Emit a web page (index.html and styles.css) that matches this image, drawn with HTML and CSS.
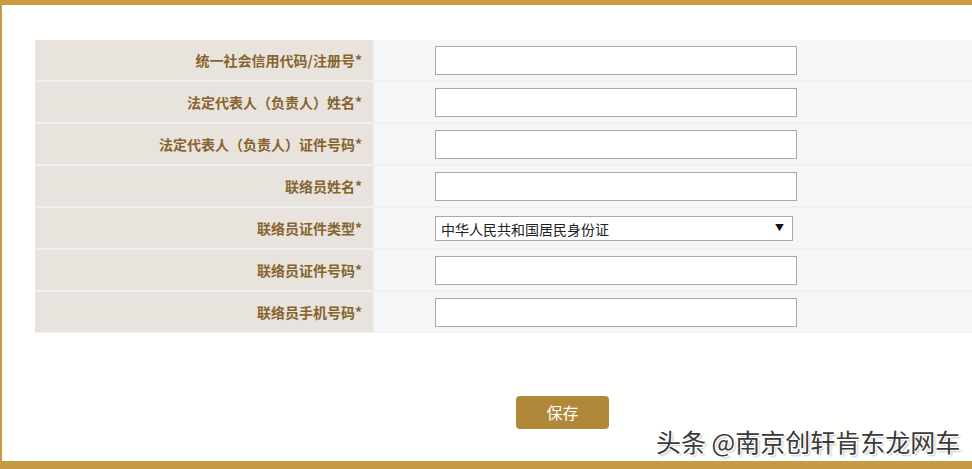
FILE: index.html
```html
<!DOCTYPE html>
<html lang="zh-CN">
<head>
<meta charset="utf-8">
<title>联络员信息</title>
<link rel="stylesheet" href="styles.css">
</head>
<body>
<div class="page">
  <div class="form-grid">
    <div class="label">统一社会信用代码/注册号*</div>
    <div class="field"><input class="text-input" type="text"></div>
    <div class="label">法定代表人（负责人）姓名*</div>
    <div class="field"><input class="text-input" type="text"></div>
    <div class="label">法定代表人（负责人）证件号码*</div>
    <div class="field"><input class="text-input" type="text"></div>
    <div class="label">联络员姓名*</div>
    <div class="field"><input class="text-input" type="text"></div>
    <div class="label">联络员证件类型*</div>
    <div class="field">
      <div class="select-wrap">
        <select class="select-input">
          <option>中华人民共和国居民身份证</option>
        </select>
      </div>
    </div>
    <div class="label">联络员证件号码*</div>
    <div class="field"><input class="text-input" type="text"></div>
    <div class="label">联络员手机号码*</div>
    <div class="field"><input class="text-input" type="text"></div>
  </div>
  <div class="actions">
    <button class="save-btn" type="button">保存</button>
  </div>
</div>
<div class="watermark">头条 @南京创轩肯东龙网车</div>
</body>
</html>
```

FILE: styles.css
```css
html, body {
  margin: 0;
  padding: 0;
  overflow: hidden;
  background: #ffffff;
}

body {
  font-family: "Noto Sans CJK SC", "Noto Sans", sans-serif;
  width: 972px;
  height: 469px;
  position: relative;
}

.page {
  box-sizing: border-box;
  width: 972px;
  height: 469px;
  border-top: 5px solid #c99a42;
  border-left: 2px solid #c99a42;
  border-bottom: 8px solid #c59b45;
  background: #fffffd;
  padding: 35px 0 0 33px;
}

.form-grid {
  display: grid;
  grid-template-columns: 338px 1fr;
  grid-auto-rows: 40px;
  gap: 2px 1px;
  background: #eef0f1;
  padding: 0 0 1px 0;
}

.label {
  background: #e9e3dd;
  color: #86642f;
  font-size: 14px;
  font-weight: 700;
  line-height: 20px;
  display: flex;
  align-items: center;
  justify-content: flex-end;
  padding-right: 11px;
}

.field {
  background: #f5f6f8;
  display: flex;
  align-items: center;
  padding-left: 61px;
}

.text-input {
  box-sizing: border-box;
  width: 362px;
  height: 29px;
  border: 1px solid #a9a9a9;
  background: #ffffff;
  margin: 0;
  padding: 0 5px;
  font-family: inherit;
}

.select-wrap {
  position: relative;
  width: 358px;
  height: 25px;
}

.select-wrap::after {
  content: "▼";
  position: absolute;
  right: 9px;
  top: 6px;
  font-size: 9px;
  line-height: 12px;
  color: #111;
  pointer-events: none;
}

.select-input {
  -webkit-appearance: none;
  appearance: none;
  box-sizing: border-box;
  width: 358px;
  height: 25px;
  border: 1px solid #a9a9a9;
  border-radius: 0;
  background: #ffffff;
  margin: 0;
  padding: 0 5px;
  font-family: "Noto Sans CJK SC", sans-serif;
  font-size: 14px;
  line-height: 22px;
  color: #222;
}

.actions {
  display: flex;
  justify-content: flex-start;
  margin-top: 63px;
  padding-left: 481px;
}

.save-btn {
  width: 93px;
  height: 33px;
  border: none;
  border-radius: 4px;
  background: #b1873a;
  color: #ffffff;
  font-family: "Noto Sans CJK SC", sans-serif;
  font-size: 16px;
  line-height: 33px;
  padding: 0;
}

.watermark {
  position: absolute;
  left: 656px;
  top: 425px;
  font-family: "Noto Sans CJK SC", sans-serif;
  font-size: 25px;
  line-height: 32px;
  color: #3a3a3a;
  white-space: nowrap;
  text-shadow: 1px 1px 0 #fff, -1px -1px 0 #fff, 1px -1px 0 #fff, -1px 1px 0 #fff, 2px 2px 2px rgba(0,0,0,0.25);
}
```
